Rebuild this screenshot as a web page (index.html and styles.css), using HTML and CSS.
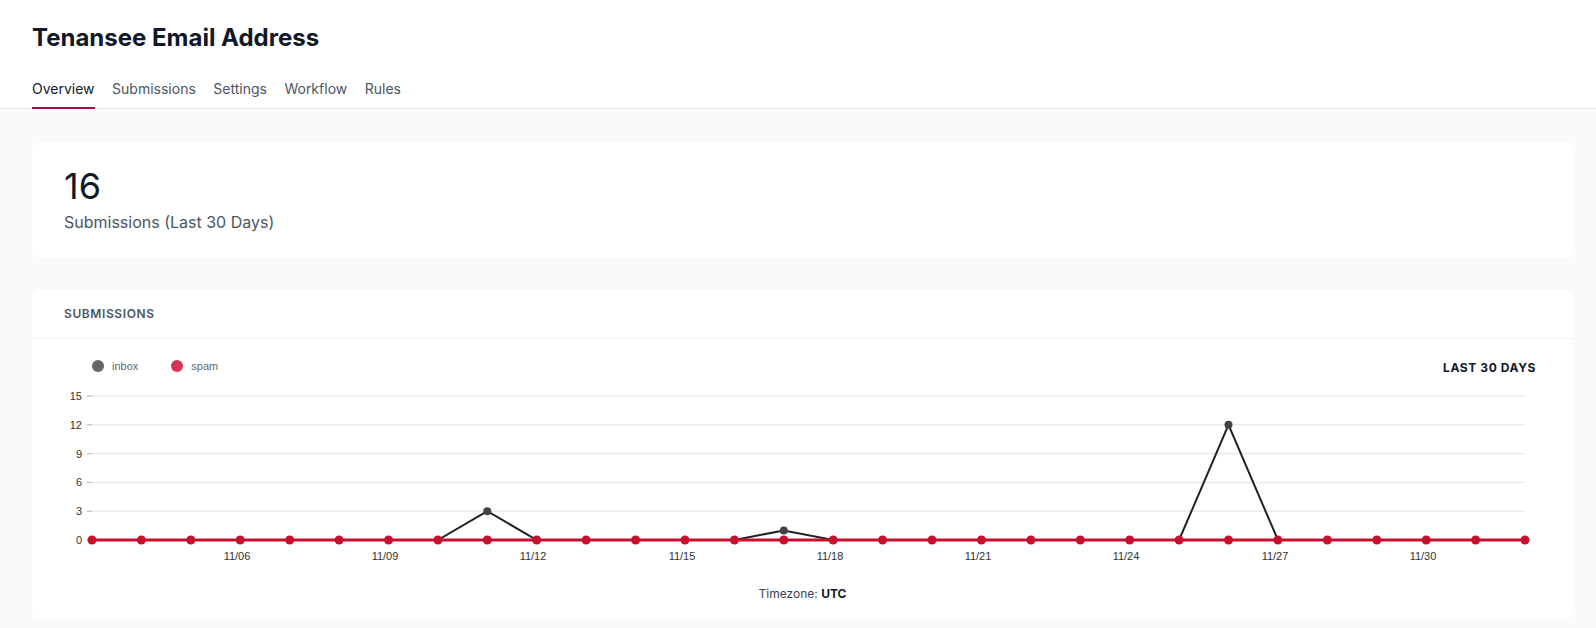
FILE: index.html
```html
<!DOCTYPE html>
<html lang="en">
<head>
<meta charset="utf-8">
<title>Tenansee Email Address</title>
<link rel="stylesheet" href="styles.css">
</head>
<body>
<header class="page-header">
  <h1 class="title">Tenansee Email Address</h1>
  <nav class="tabs">
    <a class="tab active">Overview</a>
    <a class="tab">Submissions</a>
    <a class="tab">Settings</a>
    <a class="tab">Workflow</a>
    <a class="tab">Rules</a>
  </nav>
</header>
<main class="content">
  <section class="card stat-card">
    <div class="stat-value">16</div>
    <div class="stat-label">Submissions (Last 30 Days)</div>
  </section>
  <section class="card chart-card">
    <div class="card-header">SUBMISSIONS</div>
    <div class="chart-top">
      <div class="legend">
        <span class="legend-item"><span class="dot dot-inbox"></span>inbox</span>
        <span class="legend-item"><span class="dot dot-spam"></span>spam</span>
      </div>
      <div class="range">LAST 30 DAYS</div>
    </div>
    <svg class="plot" viewBox="0 -10 1541 188" width="1541" height="188">
      <g class="grid" stroke="#ebebeb" stroke-width="1.5">
        <line x1="60" y1="3" x2="1493" y2="3"/>
        <line x1="60" y1="31.8" x2="1493" y2="31.8"/>
        <line x1="60" y1="60.6" x2="1493" y2="60.6"/>
        <line x1="60" y1="89.4" x2="1493" y2="89.4"/>
        <line x1="60" y1="118.2" x2="1493" y2="118.2"/>
        <line x1="60" y1="147" x2="1493" y2="147"/>
      </g>
      <g stroke="#c8c8c8" stroke-width="1.5">
        <line x1="55" y1="3" x2="60" y2="3"/>
        <line x1="55" y1="31.8" x2="60" y2="31.8"/>
        <line x1="55" y1="60.6" x2="60" y2="60.6"/>
        <line x1="55" y1="89.4" x2="60" y2="89.4"/>
        <line x1="55" y1="118.2" x2="60" y2="118.2"/>
        <line x1="55" y1="147" x2="60" y2="147"/>
      </g>
      <g class="axis-text" text-anchor="end">
        <text x="50" y="7">15</text>
        <text x="50" y="35.8">12</text>
        <text x="50" y="64.6">9</text>
        <text x="50" y="93.4">6</text>
        <text x="50" y="122.2">3</text>
        <text x="50" y="151">0</text>
      </g>
      <g class="axis-text" text-anchor="middle">
        <text x="205" y="167">11/06</text>
        <text x="353" y="167">11/09</text>
        <text x="501" y="167">11/12</text>
        <text x="650" y="167">11/15</text>
        <text x="798" y="167">11/18</text>
        <text x="946" y="167">11/21</text>
        <text x="1094" y="167">11/24</text>
        <text x="1243" y="167">11/27</text>
        <text x="1391" y="167">11/30</text>
      </g>
      <polyline fill="none" stroke="#222" stroke-width="2" points="60,147 405.9,147 455.3,118.2 504.7,147 702.4,147 751.8,137.4 801.2,147 1147.1,147 1196.5,31.8 1245.9,147 1493,147"/>
      <g fill="#444">
        <circle cx="455.3" cy="118.2" r="4"/>
        <circle cx="751.8" cy="137.4" r="4"/>
        <circle cx="1196.5" cy="31.8" r="4"/>
      </g>
      <line x1="60" y1="147" x2="1493" y2="147" stroke="#c8102e" stroke-width="3"/>
      <g fill="#c8102e">
        <circle cx="60" cy="147" r="4.5"/>
        <circle cx="109.4" cy="147" r="4.5"/>
        <circle cx="158.8" cy="147" r="4.5"/>
        <circle cx="208.2" cy="147" r="4.5"/>
        <circle cx="257.7" cy="147" r="4.5"/>
        <circle cx="307.1" cy="147" r="4.5"/>
        <circle cx="356.5" cy="147" r="4.5"/>
        <circle cx="405.9" cy="147" r="4.5"/>
        <circle cx="455.3" cy="147" r="4.5"/>
        <circle cx="504.7" cy="147" r="4.5"/>
        <circle cx="554.1" cy="147" r="4.5"/>
        <circle cx="603.6" cy="147" r="4.5"/>
        <circle cx="653" cy="147" r="4.5"/>
        <circle cx="702.4" cy="147" r="4.5"/>
        <circle cx="751.8" cy="147" r="4.5"/>
        <circle cx="801.2" cy="147" r="4.5"/>
        <circle cx="850.6" cy="147" r="4.5"/>
        <circle cx="900" cy="147" r="4.5"/>
        <circle cx="949.5" cy="147" r="4.5"/>
        <circle cx="998.9" cy="147" r="4.5"/>
        <circle cx="1048.3" cy="147" r="4.5"/>
        <circle cx="1097.7" cy="147" r="4.5"/>
        <circle cx="1147.1" cy="147" r="4.5"/>
        <circle cx="1196.5" cy="147" r="4.5"/>
        <circle cx="1245.9" cy="147" r="4.5"/>
        <circle cx="1295.4" cy="147" r="4.5"/>
        <circle cx="1344.8" cy="147" r="4.5"/>
        <circle cx="1394.2" cy="147" r="4.5"/>
        <circle cx="1443.6" cy="147" r="4.5"/>
        <circle cx="1493" cy="147" r="4.5"/>
      </g>
    </svg>
    <div class="timezone">Timezone: <strong>UTC</strong></div>
  </section>
</main>
</body>
</html>
```
FILE: styles.css
```css
* { box-sizing: border-box; }
html, body { margin: 0; padding: 0; }
body {
  font-family: Inter, "Noto Sans", "Liberation Sans", sans-serif;
  background: #f9fafb;
  color: #111827;
}
.page-header {
  background: #ffffff;
  border-bottom: 1px solid #e5e7eb;
  padding: 22px 32px 0 32px;
}
.title {
  margin: 0;
  font-size: 24px;
  line-height: 32px;
  font-weight: 700;
  color: #111827;
}
.tabs {
  display: flex;
  gap: 17.5px;
  margin-top: 25px;
}
.tab {
  font-size: 14px;
  line-height: 20px;
  color: #4b5563;
  padding-bottom: 8px;
  border-bottom: 2px solid transparent;
  margin-bottom: -1px;
}
.tab.active {
  color: #111827;
  border-bottom-color: #9f1239;
}
.content {
  padding: 33px 23px 32px 32px;
  display: flex;
  flex-direction: column;
  gap: 32px;
}
.card {
  background: #ffffff;
  border-radius: 8px;
}
.stat-card {
  padding: 24px 32px 24px 32px;
}
.stat-value {
  font-size: 36px;
  line-height: 40px;
  font-weight: 400;
  color: #111827;
}
.stat-label {
  margin-top: 4px;
  font-size: 16px;
  line-height: 24px;
  color: #4b5563;
}
.card-header {
  padding: 16px 32px;
  font-size: 12px;
  line-height: 16px;
  font-weight: 600;
  letter-spacing: 0.05em;
  color: #4b5563;
  border-bottom: 1px solid #f3f4f6;
}
.chart-top {
  height: 44px;
  padding: 10px 37px 0 60px;
  display: flex;
  align-items: center;
  justify-content: space-between;
}
.legend {
  display: flex;
  gap: 33px;
  font-family: "Liberation Sans", Arial, sans-serif;
  font-size: 11px;
  color: #666666;
}
.legend-item {
  display: flex;
  align-items: center;
  gap: 8px;
}
.dot {
  width: 12px;
  height: 12px;
  border-radius: 50%;
  display: inline-block;
}
.dot-inbox { background: #666666; }
.dot-spam { background: #d4364f; }
.range {
  font-size: 12px;
  line-height: 16px;
  font-weight: 700;
  letter-spacing: 0.05em;
  color: #111827;
  padding-top: 3px;
}
.plot {
  display: block;
  width: 100%;
  height: 188px;
}
.axis-text {
  font-family: "Liberation Sans", Arial, sans-serif;
  font-size: 11px;
  fill: #333333;
}
.timezone {
  padding: 15px 0 17px 0;
  text-align: center;
  font-size: 12px;
  line-height: 16px;
  color: #374151;
}
.timezone strong {
  font-weight: 700;
  color: #111827;
}
```
